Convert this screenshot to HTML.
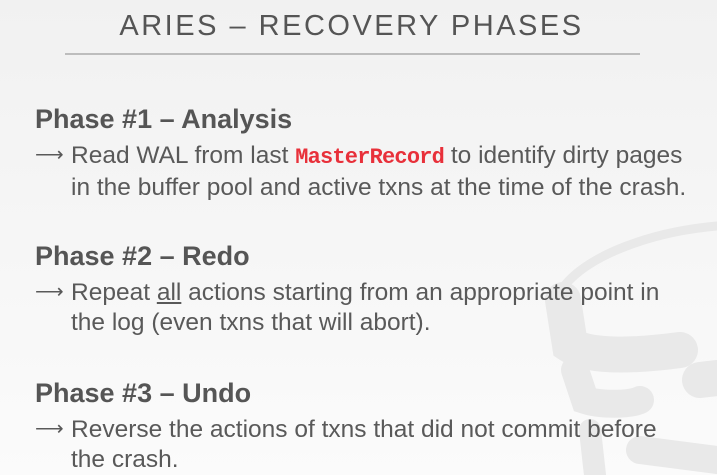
<!DOCTYPE html>
<html><head><style>
html,body{margin:0;padding:0}
body{width:717px;height:475px;overflow:hidden;position:relative;background:linear-gradient(#f1f1f1,#fbfbfb);font-family:"Liberation Sans",sans-serif;color:#595959}
.t{position:absolute;left:0;width:703px;text-align:center;top:10px;font-size:29px;letter-spacing:2.5px;color:#555}
.rule{position:absolute;left:65px;width:575px;top:53px;height:2px;background:#bdbdbd}
.h{position:absolute;left:35px;font-weight:bold;font-size:27px;color:#555}
.b{position:absolute;left:35px;font-size:24.5px;line-height:29.5px;color:#595959;white-space:nowrap}
.b .ar{position:absolute;left:0;font-size:20px}
.b .tx{margin-left:36px;display:block}
.m{font-family:"Liberation Mono",monospace;color:#e8303a;font-size:22px;font-weight:bold;letter-spacing:-0.8px}
svg{position:absolute;left:0;top:0}
</style></head><body>
<svg width="717" height="475">
<g fill="none" stroke="#e9e9e9" stroke-linecap="round">
<path d="M717 226 C650 232 590 255 565 285" stroke-width="9"/>
<path d="M563 300 L570 345 C585 355 620 358 680 350" stroke-width="36"/>
<path d="M575 370 L585 400 C600 405 630 405 640 400" stroke-width="28"/>
<path d="M700 380 L717 378" stroke-width="36"/>
<path d="M590 430 L595 475" stroke-width="22"/>
<path d="M640 450 L717 460" stroke-width="28"/>
</g>
</svg>
<div class="t">ARIES – RECOVERY PHASES</div>
<div class="rule"></div>
<div class="h" style="top:104px">Phase #1 – Analysis</div>
<div class="b" style="top:141px"><span class="ar">⟶</span><span class="tx">Read WAL from last <span class="m">MasterRecord</span> to identify dirty pages<br>in the buffer pool and active txns at the time of the crash.</span></div>
<div class="h" style="top:241px">Phase #2 – Redo</div>
<div class="b" style="top:278px"><span class="ar">⟶</span><span class="tx">Repeat <u>all</u> actions starting from an appropriate point in<br>the log (even txns that will abort).</span></div>
<div class="h" style="top:378px">Phase #3 – Undo</div>
<div class="b" style="top:415px"><span class="ar">⟶</span><span class="tx">Reverse the actions of txns that did not commit before<br>the crash.</span></div>
</body></html>
